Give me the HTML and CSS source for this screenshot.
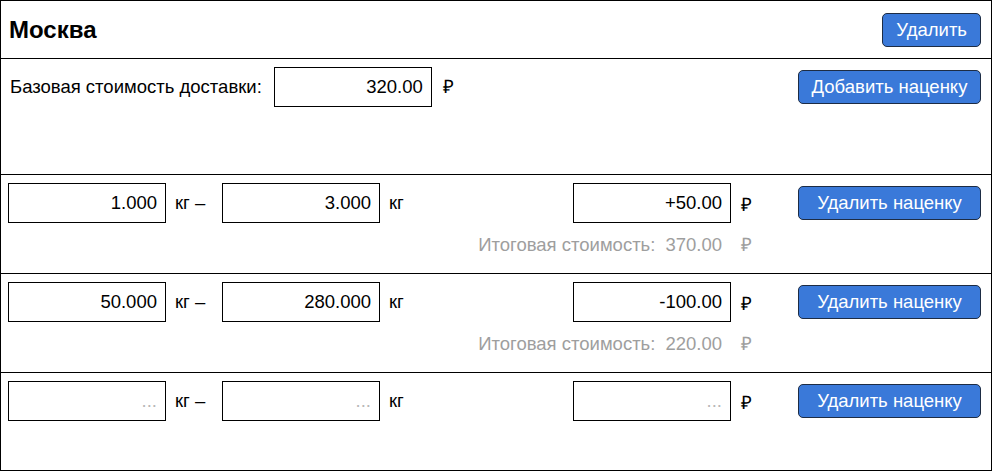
FILE: index.html
```html
<!DOCTYPE html>
<html lang="ru">
<head>
    <meta charset="UTF-8">
    <meta name="viewport" content="width=device-width, initial-scale=1.0">
    <title>Наценки на доставку</title>
    <link rel="stylesheet" href="styles.css">
</head>
<body>

    <div class="city">
        <!-- Заголовок города -->
        <div class="city-head">
            <h2>Москва</h2>
            <button class="btn">Удалить</button>
        </div>

        <!-- Базовая стоимость -->
        <div class="base">
            <label for="basePrice">Базовая стоимость доставки:</label>
            <input type="text" id="basePrice" class="field" value="320.00">
            <span class="unit">₽</span>
            <button class="btn btn-wide push">Добавить наценку</button>
        </div>

        <!-- Наценки по весу -->
        <div class="markup">
            <input type="text" class="field" value="1.000">
            <span class="unit">кг –</span>
            <input type="text" class="field" value="3.000">
            <span class="unit">кг</span>
            <input type="text" class="field price" value="+50.00">
            <span class="unit">₽</span>
            <button class="btn btn-wide">Удалить наценку</button>
            <div class="total">
                <span class="total-label">Итоговая стоимость:</span>
                <span class="total-value">370.00</span>
                <span class="total-unit">₽</span>
            </div>
        </div>

        <div class="markup">
            <input type="text" class="field" value="50.000">
            <span class="unit">кг –</span>
            <input type="text" class="field" value="280.000">
            <span class="unit">кг</span>
            <input type="text" class="field price" value="-100.00">
            <span class="unit">₽</span>
            <button class="btn btn-wide">Удалить наценку</button>
            <div class="total">
                <span class="total-label">Итоговая стоимость:</span>
                <span class="total-value">220.00</span>
                <span class="total-unit">₽</span>
            </div>
        </div>

        <div class="markup">
            <input type="text" class="field" placeholder="...">
            <span class="unit">кг –</span>
            <input type="text" class="field" placeholder="...">
            <span class="unit">кг</span>
            <input type="text" class="field price" placeholder="...">
            <span class="unit">₽</span>
            <button class="btn btn-wide">Удалить наценку</button>
        </div>
    </div>

</body>
</html>
```

FILE: styles.css
```css
* {
    box-sizing: border-box;
}
body {
    font-family: "Liberation Sans", Arial, sans-serif;
    font-size: 18.5px;
    color: #000;
    margin: 0;
    padding: 0;
}

.city {
    width: 992px;
    height: 471px;
    border: 1px solid #000;
}

.city-head {
    display: flex;
    align-items: center;
    justify-content: space-between;
    height: 58px;
    padding: 0 10px 0 8px;
    border-bottom: 1px solid #000;
}
.city-head h2 {
    margin: 0;
    font-size: 24px;
    font-weight: bold;
}

.btn {
    height: 34px;
    padding: 0 13px;
    background-color: #3a79d9;
    color: #fff;
    font-family: inherit;
    font-size: 18.5px;
    border: 1px solid #1d2c44;
    border-radius: 5px;
    cursor: pointer;
}
.btn:hover {
    background-color: #2f68c0;
}
.btn-wide {
    width: 183px;
    padding: 0;
}

.field {
    width: 158px;
    height: 40px;
    padding: 0 8px;
    border: 1px solid #000;
    font-family: inherit;
    font-size: 18.5px;
    text-align: right;
    color: #000;
    outline: none;
}
.field::placeholder {
    color: #b8b8b8;
}

.unit {
    padding-left: 9px;
}

.base {
    display: flex;
    align-items: flex-start;
    height: 116px;
    padding: 8px 10px 0 9px;
    border-bottom: 1px solid #000;
}
.base label {
    line-height: 40px;
    margin-right: 12px;
}
.base .unit {
    line-height: 40px;
    padding-left: 11px;
}
.base .btn {
    margin-top: 3px;
}
.push {
    margin-left: auto;
}

/* griglia: input, unità, input, unità, spazio, prezzo, unità, bottone */
.markup {
    display: grid;
    grid-template-columns: 158px 56px 158px 1fr 158px 67px 183px;
    grid-template-rows: 40px auto;
    align-items: center;
    align-content: start;
    height: 99px;
    padding: 8px 10px 0 7px;
    border-bottom: 1px solid #000;
}
.markup:last-child {
    border-bottom: none;
}
.markup .price {
    grid-column: 5;
}
.markup .unit {
    padding-left: 9px;
}
.markup .price + .unit {
    padding-left: 10px;
}

.total {
    grid-column: 1 / 7;
    display: flex;
    justify-content: flex-end;
    margin-top: 11px;
    line-height: 22px;
    color: #9e9e9e;
}
.total-label {
    margin-right: 10px;
}
.total-value {
    padding-right: 9px;
}
.total-unit {
    width: 57px;
    margin-left: 10px;
}
```
